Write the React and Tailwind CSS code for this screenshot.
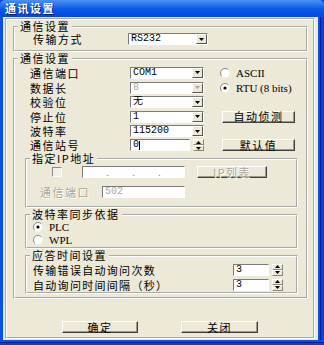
import React from 'react';

// classic win32 bits
const Arrow = ({ down = true, color = '#000' }) => (
  <svg width="5" height="3" viewBox="0 0 5 3">
    <path d={down ? 'M0 0 H5 L2.5 3 Z' : 'M0 3 H5 L2.5 0 Z'} fill={color} />
  </svg>
);

const Select = ({ value, width, disabled }) => (
  <div className={`flex h-[12px] ${width} bg-white border border-t-[#7b7b7b] border-l-[#7b7b7b] border-b-white border-r-white`}>
    <span className={`flex-1 pl-[2px] text-[10px] leading-[10px] font-['Liberation_Mono','Noto_Sans_CJK_SC',monospace] ${disabled ? 'text-[#aca899]' : 'text-black'}`}>
      {value}
    </span>
    <div className="w-[11px] h-full flex items-center justify-center bg-[#ece9d8] border border-t-white border-l-white border-b-[#555] border-r-[#555]">
      <Arrow color={disabled ? '#aca899' : '#000'} />
    </div>
  </div>
);

const Spin = ({ value, width, cursor }) => (
  <div className="flex h-[12px] items-center">
    <div className={`h-[12px] ${width} bg-white border border-t-[#7b7b7b] border-l-[#7b7b7b] border-b-white border-r-white flex items-center pl-[2px] text-[10px] leading-[10px] font-['Liberation_Mono',monospace]`}>
      {value}
      {cursor && <span className="w-[1px] h-[9px] bg-black" />}
    </div>
    <div className="ml-[3px] w-[11px] h-[12px] flex flex-col">
      <div className="h-[6px] flex items-center justify-center bg-[#ece9d8] border border-t-white border-l-white border-b-[#8a8778] border-r-[#8a8778]">
        <Arrow down={false} />
      </div>
      <div className="h-[6px] flex items-center justify-center bg-[#ece9d8] border border-t-white border-l-white border-b-[#8a8778] border-r-[#8a8778]">
        <Arrow />
      </div>
    </div>
  </div>
);

const Radio = ({ checked, label }) => (
  <div className="flex items-center">
    <svg width="10" height="10" viewBox="0 0 10 10">
      <circle cx="5" cy="5" r="4.5" fill="#fff" />
      <path d="M1.8 8.2 A4.5 4.5 0 0 1 8.2 1.8" stroke="#8a8a8a" fill="none" />
      {checked && <circle cx="5" cy="5" r="1.6" fill="#000" />}
    </svg>
    <span className="ml-[6px] text-[11px] leading-[12px] font-['Liberation_Serif',serif]">{label}</span>
  </div>
);

const Btn = ({ className, disabled, children }) => (
  <div
    className={`${className} flex items-center justify-center bg-[#ece9d8] border border-t-white border-l-white border-b-[#404040] border-r-[#404040] shadow-[inset_-1px_-1px_0_#9d9a8c] text-[11px] leading-none tracking-[1.5px] ${
      disabled ? 'text-[#aca899] [text-shadow:1px_1px_0_#fff]' : 'text-black'
    }`}
  >
    {children}
  </div>
);

const Group = ({ title, className, children }) => (
  <fieldset className={`border-2 [border-style:groove] border-white min-w-0 ${className}`}>
    <legend className="ml-[3px] px-[2px] text-[11px] leading-[13px] tracking-[1.5px]">{title}</legend>
    {children}
  </fieldset>
);

const Row = ({ h, label, children, right }) => (
  <div className={`flex items-center ${h} pl-[15px]`}>
    <span className="w-[100px] tracking-[1.5px] leading-[12px]">{label}</span>
    <div className="w-[74px]">{children}</div>
    {right}
  </div>
);

export default function App() {
  return (
    <div className="w-[324px] h-[345px] flex flex-col bg-[#0a47d8] overflow-hidden font-['Noto_Sans_CJK_SC','Noto_Sans',sans-serif] text-[11px] text-black">
      <div className="h-[17px] shrink-0 flex items-center pl-[5px] rounded-t-[5px] bg-linear-to-b from-[#4a90f5] via-[#0b5be6] to-[#0448d6]">
        <span className="text-white font-bold tracking-[1.5px] text-[11px] leading-[13px] [text-shadow:1px_1px_0_#0a246a]">通讯设置</span>
      </div>

      <div className="flex h-[323px] shrink-0">
        <div className="w-[3px] bg-[#0b50e2]" />
        <div className="w-[315px] bg-[#ece9d8] pt-[1px] pl-[2px]">
          <div className="w-[310px] h-[321px] border-2 [border-style:groove] border-white flex flex-col">
            <Group title="通信设置" className="ml-[6px] w-[295px] h-[32px]">
              <div className="flex items-center h-[12px] pl-[18px]">
                <span className="w-[95px] tracking-[1.5px] leading-[12px]">传输方式</span>
                <Select value="RS232" width="w-[80px]" />
              </div>
            </Group>

            <Group title="通信设置" className="ml-[6px] w-[295px] h-[247px]">
              <Row h="h-[15px]" label="通信端口" right={<div className="ml-[16px]"><Radio label="ASCII" /></div>}>
                <Select value="COM1" width="w-[74px]" />
              </Row>
              <Row h="h-[15px]" label="数据长" right={<div className="ml-[16px]"><Radio checked label="RTU (8 bits)" /></div>}>
                <Select value="8" width="w-[74px]" disabled />
              </Row>
              <Row h="h-[14px]" label="校验位">
                <Select value="无" width="w-[74px]" />
              </Row>
              <Row h="h-[15px]" label="停止位" right={<Btn className="ml-[18px] w-[73px] h-[12px]">自动侦测</Btn>}>
                <Select value="1" width="w-[74px]" />
              </Row>
              <Row h="h-[14px]" label="波特率">
                <Select value="115200" width="w-[74px]" />
              </Row>
              <Row h="h-[14px]" label="通信站号" right={<Btn className="ml-[18px] w-[73px] h-[12px]">默认值</Btn>}>
                <Spin value="0" width="w-[60px]" cursor />
              </Row>

              <Group title="指定IP地址" className="ml-[10px] w-[273px] h-[56px]">
                <div className="flex items-center h-[14px] pl-[25px]">
                  <div className="w-[10px] h-[10px] bg-[#f1efe6] border border-t-[#8a8a8a] border-l-[#8a8a8a] border-b-white border-r-white" />
                  <div className="ml-[20px] w-[103px] h-[12px] flex items-center bg-white border border-t-[#7b7b7b] border-l-[#7b7b7b] border-b-white border-r-white text-[#888] text-[10px] leading-[10px]">
                    <div className="flex-1" />
                    <span>.</span>
                    <div className="flex-1" />
                    <span>.</span>
                    <div className="flex-1" />
                    <span>.</span>
                    <div className="flex-1" />
                  </div>
                  <Btn className="ml-[12px] w-[70px] h-[12px]" disabled>IP列表</Btn>
                </div>
                <div className="flex items-center h-[13px] mt-[6px] pl-[13px]">
                  <span className="w-[62px] tracking-[1.5px] leading-[12px] text-[#aca899] [text-shadow:1px_1px_0_#fff]">通信端口</span>
                  <div className="w-[83px] h-[12px] bg-white border border-t-[#7b7b7b] border-l-[#7b7b7b] border-b-white border-r-white pl-[2px] text-[10px] leading-[10px] text-[#aca899] font-['Liberation_Mono',monospace]">
                    502
                  </div>
                </div>
              </Group>

              <Group title="波特率同步依据" className="ml-[10px] w-[273px] h-[41px]">
                <div className="flex items-center h-[12px] pl-[6px]">
                  <Radio checked label="PLC" />
                </div>
                <div className="flex items-center h-[14px] pl-[6px]">
                  <Radio label="WPL" />
                </div>
              </Group>

              <Group title="应答时间设置" className="ml-[10px] w-[273px] h-[45px]">
                <div className="flex items-center h-[15px] pl-[6px]">
                  <span className="w-[200px] tracking-[1.3px] leading-[12px]">传输错误自动询问次数</span>
                  <Spin value="3" width="w-[36px]" />
                </div>
                <div className="flex items-center h-[15px] pl-[6px]">
                  <span className="w-[200px] tracking-[1.3px] leading-[12px]">自动询问时间间隔（秒）</span>
                  <Spin value="3" width="w-[36px]" />
                </div>
              </Group>
            </Group>

            <div className="flex mt-[22px] pl-[55px]">
              <Btn className="w-[76px] h-[12px]">确定</Btn>
              <Btn className="ml-[43px] w-[77px] h-[12px]">关闭</Btn>
            </div>
          </div>
        </div>
        <div className="w-[6px] flex">
          <div className="w-[2px] bg-[#0b50e2]" />
          <div className="w-[1px] bg-[#001c98]" />
          <div className="w-[3px] bg-[#0a40cf]" />
        </div>
      </div>

      <div className="h-[5px] shrink-0 flex flex-col">
        <div className="h-[2px] bg-[#0b50e2]" />
        <div className="h-[1px] bg-[#001c98]" />
        <div className="h-[2px] bg-[#0a40cf]" />
      </div>
    </div>
  );
}
